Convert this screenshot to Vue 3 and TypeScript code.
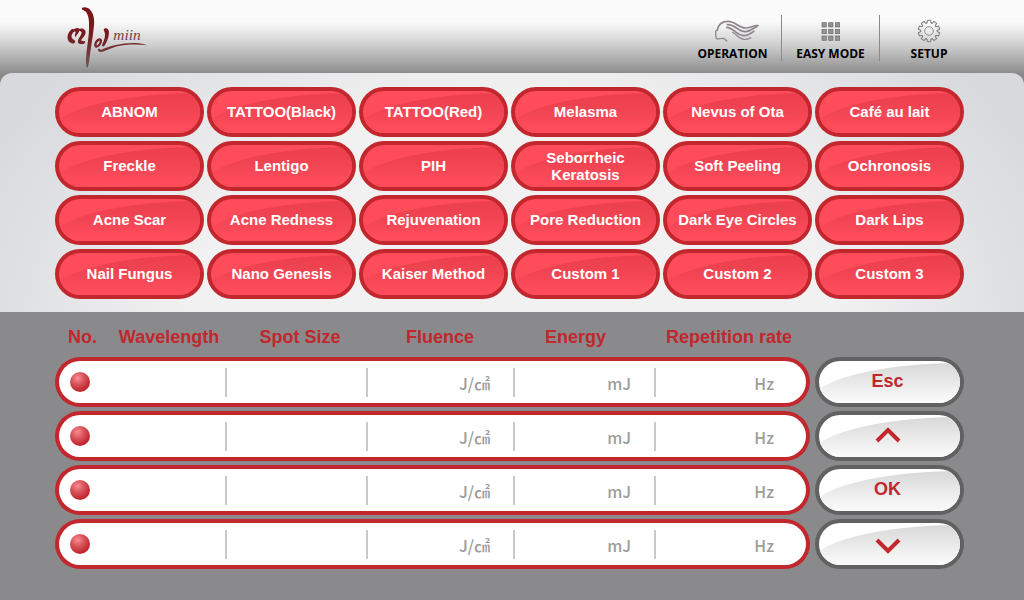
<script setup lang="ts">
interface Treatment {
  id: string
  label: string
}

interface Preset {
  id: number
  wavelength: string
  spot: string
}

const treatments: Treatment[] = [
  'ABNOM', 'TATTOO(Black)', 'TATTOO(Red)', 'Melasma', 'Nevus of Ota', 'Café au lait',
  'Freckle', 'Lentigo', 'PIH', 'Seborrheic Keratosis', 'Soft Peeling', 'Ochronosis',
  'Acne Scar', 'Acne Redness', 'Rejuvenation', 'Pore Reduction', 'Dark Eye Circles', 'Dark Lips',
  'Nail Fungus', 'Nano Genesis', 'Kaiser Method', 'Custom 1', 'Custom 2', 'Custom 3',
].map((label) => ({ id: label, label }))

const presets: Preset[] = [1, 2, 3, 4].map((id) => ({ id, wavelength: '', spot: '' }))

const teeth: number[] = Array.from({ length: 10 }, (_, i) => i * 36)
const cells: number[] = Array.from({ length: 9 }, (_, i) => i)
</script>

<template>
  <div class="screen">
    <header class="top">
      <svg class="logo" viewBox="0 0 360 240" role="img" aria-label="miin">
        <defs>
          <linearGradient id="ink" x1="0" y1="20" x2="0" y2="205" gradientUnits="userSpaceOnUse">
            <stop offset="0" stop-color="#7d1418" />
            <stop offset="0.5" stop-color="#761c20" />
            <stop offset="1" stop-color="#70585a" />
          </linearGradient>
        </defs>
        <g fill="url(#ink)">
          <path d="M96 24 C102 19 115 22 121 30 C131 42 134 58 132 76 C129 110 122 145 118 178 C117 190 115 200 111 205 C107 195 107 180 109 165 C112 132 118 105 117 78 C118 58 114 42 106 34 C101 30 94 31 96 24 Z" />
          <path d="M62 91 C67 84 74 88 73 94 C66 101 62 108 66 115 C68 119 75 119 76 125 C74 133 62 132 56 124 C49 112 54 98 62 91 Z" />
          <path d="M68 91 C77 82 88 82 89 89 C88 96 81 104 76 111 C72 106 77 100 77 95 C74 94 70 97 68 91 Z" />
          <path d="M86 88 C95 81 108 88 107 98 C106 106 97 114 93 121 C95 123 99 124 105 123 C107 129 101 134 94 132 C82 132 82 124 86 116 C91 108 97 99 94 95 C91 93 87 95 86 88 Z" />
          <path d="M163 86 C170 82 177 88 177 98 C176 113 171 126 163 138 C158 142 154 137 157 132 C164 119 167 106 164 97 C163 93 159 91 163 86 Z" />
          <path d="M154 117 C160 123 152 140 141 143 C133 144 130 135 135 125 C139 117 149 111 154 117 Z M149 122 C144 122 139 130 140 136 C145 135 150 127 149 122 Z" fill-rule="evenodd" />
          <path d="M144 148 C147 144 150 147 153 150 C178 137 220 128 255 129 C270 129 284 133 292 136 C264 132 229 132 202 139 C180 145 165 155 151 156 C146 156 143 152 144 148 Z" />
        </g>
        <text x="190" y="121" class="logo-name">miin</text>
      </svg>

      <nav class="nav">
        <button type="button" class="nav-item">
          <svg class="nav-icon wide" viewBox="102 55 138 72" fill="none" stroke="#8f878d" stroke-width="5" stroke-linecap="round" stroke-linejoin="round">
            <path d="M112 88 C115 73 126 62 144 62 C168 62 174 82 196 82 C212 82 220 74 234 75" />
            <path d="M112 88 L107 92 V103 L109 113 C116 118 126 110 133 114 C136 116 137 119 141 121" stroke-width="4" />
            <path d="M142 72 C166 71 174 93 196 93 C212 93 216 84 230 78" />
            <path d="M140 80 C160 80 168 105 192 105 C206 105 212 97 222 92" />
            <path d="M158 95 C168 98 172 114 192 116 C202 117 206 114 212 111" stroke-width="4" />
          </svg>
          <span>OPERATION</span>
        </button>
        <button type="button" class="nav-item">
          <svg class="nav-icon" viewBox="0 0 72 72">
            <rect
              v-for="n in cells" :key="n"
              :x="9 + (n % 3) * 20" :y="11 + Math.floor(n / 3) * 20"
              width="13" height="13" fill="#929292" stroke="#6e6e6e" stroke-width="2"
            />
          </svg>
          <span>EASY MODE</span>
        </button>
        <button type="button" class="nav-item">
          <svg class="nav-icon" viewBox="-12 -12 24 24" fill="none" stroke="#7c7c7c">
            <path
              v-for="a in teeth" :key="a" :transform="`rotate(${a})`"
              d="M-3.300 -7.700 L-1.900 -8.200 L-1.700 -10.700 H1.700 L1.900 -8.200 L3.300 -7.700"
            />
            <circle r="4.300" stroke-width="0.800" />
          </svg>
          <span>SETUP</span>
        </button>
      </nav>
    </header>

    <main class="body">
      <section class="treatments">
        <button v-for="t in treatments" :key="t.id" type="button" class="pill red">
          <span>{{ t.label }}</span>
        </button>
      </section>

      <section class="settings">
        <table class="presets">
          <thead>
            <tr>
              <th scope="col" class="no">No.</th>
              <th scope="col" class="wavelength">Wavelength</th>
              <th scope="col" class="spot">Spot Size</th>
              <th scope="col" class="fluence">Fluence</th>
              <th scope="col" class="energy">Energy</th>
              <th scope="col" class="rate">Repetition rate</th>
            </tr>
          </thead>
          <tbody>
            <tr v-for="p in presets" :key="p.id">
              <td><span class="dot"></span></td>
              <td class="split">{{ p.wavelength }}</td>
              <td class="split">{{ p.spot }}</td>
              <td class="split">J/㎠</td>
              <td class="split">mJ</td>
              <td>Hz</td>
            </tr>
          </tbody>
        </table>

        <div class="keys">
          <button type="button" class="pill grey"><span>Esc</span></button>
          <button type="button" class="pill grey" aria-label="Up">
            <svg viewBox="0 0 24 14"><path d="M1 13 L12 2 L23 13" /></svg>
          </button>
          <button type="button" class="pill grey"><span>OK</span></button>
          <button type="button" class="pill grey" aria-label="Down">
            <svg viewBox="0 0 24 14"><path d="M1 4 L12 15 L23 4" /></svg>
          </button>
        </div>
      </section>
    </main>
  </div>
</template>

<style>
body {
  margin: 0;
  background: #8a8a8c;
}
</style>

<style scoped>
.screen {
  font-family: "Liberation Sans", Arial, sans-serif;
  background: linear-gradient(#fcfcfc 0, #fafafa 22px, #cfcfcf 45px, #8a8a8a 74px, #858585 90px, transparent 90px);
}

button {
  margin: 0;
  padding: 0;
  border: 0;
  background: none;
  font: inherit;
  cursor: pointer;
}

.top {
  display: flex;
  justify-content: space-between;
  height: 73px;
  padding: 0 46px 0 50px;
}

.logo {
  width: 120px;
  height: 80px;
}

.logo-name {
  font: italic 46px "Liberation Serif", serif;
  fill: #6b4548;
}

.nav {
  display: flex;
  padding-top: 15px;
}

.nav-item {
  display: flex;
  flex-direction: column;
  align-items: center;
  gap: 3px;
  width: 98px;
  height: 46px;
  padding-top: 4px;
  box-sizing: border-box;
  border-right: 1px solid #8a8a8a;
  font: bold 12px/16px "Open Sans", "Noto Sans", sans-serif;
  color: #000;
}

.nav-item:last-child {
  border-right: 0;
}

.nav-icon {
  flex: none;
  width: 24px;
  height: 24px;
}

.nav-icon.wide {
  width: 46px;
  margin-left: 8px;
}

.treatments {
  display: grid;
  grid-template-columns: repeat(6, 1fr);
  gap: 4px 3px;
  padding: 14px 60px 13px 55px;
  border-radius: 12px 12px 0 0;
  background: radial-gradient(ellipse 58% 180% at 50% 110%, #f1f1f1 0, #f1f1f1 55%, #dcdde1 90%, #d8d9dd 100%);
}

.pill {
  position: relative;
  display: flex;
  align-items: center;
  justify-content: center;
  height: 50px;
  box-sizing: border-box;
  border: 4px solid;
  border-radius: 25px;
  overflow: hidden;
}

.pill::before {
  content: "";
  position: absolute;
  inset: 2px -1px 0 -9px;
  border-radius: 100% 0 0 0;
}

.pill span,
.pill svg {
  position: relative;
}

.red {
  padding: 0 5px 1px;
  border-color: #c1272d;
  background: #ff4c5b;
  color: #fff;
  font-size: 15px;
  font-weight: bold;
  line-height: 17px;
}

.red::before {
  background: linear-gradient(#ec3f4d, #f04452 40%, #ff4c5b 90%);
}

.settings {
  display: flex;
  gap: 5px;
  padding: 0 60px 27px 55px;
  background: #8a8a8c;
}

.presets {
  flex: 1;
  table-layout: fixed;
  border-collapse: separate;
  border-spacing: 0 4px;
}

th {
  height: 37px;
  padding: 5px 0 0;
  box-sizing: border-box;
  color: #c1272d;
  font-size: 18px;
  line-height: 20px;
  white-space: nowrap;
}

.no {
  width: 56px;
  padding-left: 13px;
  text-align: left;
}

.wavelength {
  width: 116px;
}

.spot {
  width: 141px;
  padding-left: 5px;
}

.fluence {
  width: 147px;
  padding-right: 3px;
}

.energy {
  width: 141px;
  padding-right: 20px;
}

.rate {
  padding-right: 8px;
}

td {
  height: 50px;
  padding: 2px 25px 0 0;
  box-sizing: border-box;
  border: solid #c1272d;
  border-width: 4px 0;
  background: #fff;
  color: #9c9c9c;
  font: 500 16px/20px "Noto Sans CJK KR", sans-serif;
  text-align: right;
}

td:first-child {
  padding: 0 0 0 11px;
  border-left-width: 4px;
  border-radius: 25px 0 0 25px;
}

td:last-child {
  padding-right: 32px;
  border-right-width: 4px;
  border-radius: 0 25px 25px 0;
}

.split {
  background: linear-gradient(#c9c9c9, #c9c9c9) right center / 2px 29px no-repeat #fff;
}

.dot {
  display: block;
  width: 20px;
  height: 20px;
  border-radius: 50%;
  background: radial-gradient(circle at 38% 30%, #f98c94 0, #d8535b 35%, #c1272d 70%, #bd2229 100%);
}

.keys {
  display: flex;
  flex-direction: column;
  gap: 4px;
  width: 149px;
  padding-top: 45px;
}

.grey {
  border-color: #616161;
  background: #fff;
  color: #c1272d;
  font-size: 18px;
  font-weight: bold;
  line-height: 20px;
  padding: 0 4px 2px 0;
}

.grey::before {
  background: linear-gradient(#d8d8d8, #fbfbfb);
}

.grey svg {
  flex: none;
  width: 24px;
  height: 14px;
  overflow: visible;
  fill: none;
  stroke: #c1272d;
  stroke-width: 4;
}
</style>
